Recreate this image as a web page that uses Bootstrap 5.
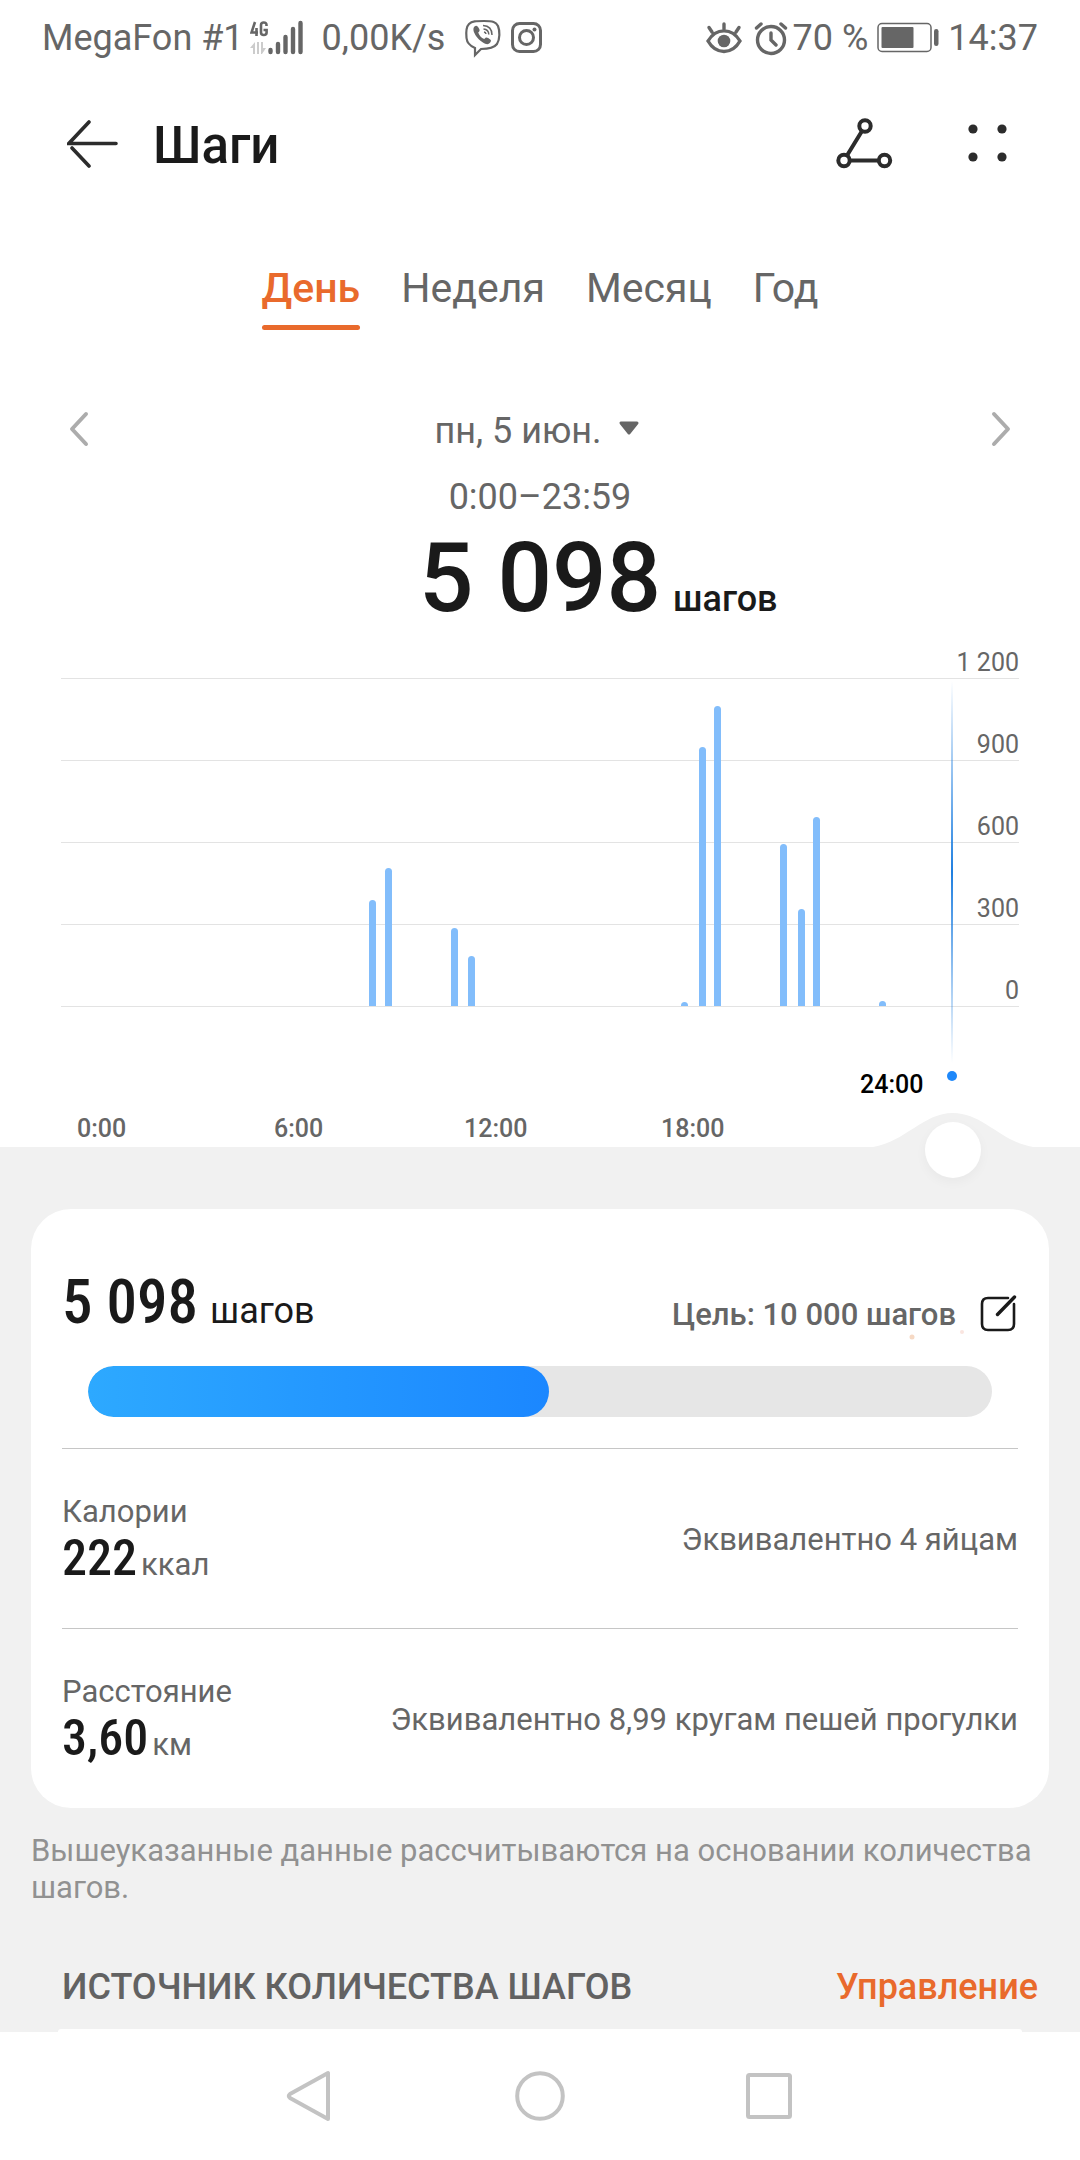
<!DOCTYPE html>
<html lang="ru">
<head>
<meta charset="utf-8">
<meta name="viewport" content="width=device-width, initial-scale=1">
<title>Шаги</title>
<link rel="stylesheet" href="https://cdn.jsdelivr.net/npm/bootstrap@5.3.0/dist/css/bootstrap.min.css">
<style>
  body { font-family: Roboto, "Noto Sans", sans-serif; color: #1a1a1a; background: #fff; }
  button { border: 0; background: none; padding: 0; color: inherit; }
  svg { display: block; }
  .ink-soft { color: #666; }
  .accent { color: #e96a2c; }
  .digits { font-family: "Roboto Condensed", "Liberation Sans Narrow", Roboto, sans-serif; }

  .statusbar { height: 76px; padding: 0 42px; font-size: 36px; line-height: 48px; color: #666; }
  .net-type { width: 54px; height: 36px; margin-left: 6px; }
  .net-speed { margin: 0 18px; }
  .topbar { height: 136px; padding: 0 63px 0 67px; }
  .topbar h1 { margin-left: 34px; font-size: 51px; line-height: 60px; font-weight: 500; }

  .period-tabs { margin-top: 52px; gap: 41px; font-size: 41px; line-height: 48px; }
  .period-tabs .nav-link { position: relative; padding: 0 0 18px; color: #666; }
  .period-tabs .nav-link.active { color: #e96a2c; font-weight: 500; }
  .period-tabs .nav-link.active::after { content: ""; position: absolute; left: 0; right: 0; bottom: 0; height: 5px; border-radius: 3px; background: #e96a2c; }

  .date-row { margin-top: 77px; padding: 0 68px; }
  .text-mid { font-size: 36px; line-height: 48px; }
  .time-range { margin-top: 18px; }
  .total { margin-top: 9px; font-size: 96px; line-height: 96px; font-weight: 500; }
  .total-unit { font-size: 36px; line-height: 48px; }
  .total-unit span { margin-left: 12px; }

  .chart { margin-top: 22px; height: 499px; font-size: 25px; line-height: 30px; }
  .plot { margin: 0 61px; }
  .grid-step { height: 82px; border-bottom: 1px solid #e3e3e3; }
  .grid-step:first-child { height: 31px; }
  .bars { left: 0; right: 0; bottom: 1px; height: 328px; }
  .bars i { position: absolute; bottom: 0; width: 7px; margin-left: -4px; background: #82bdfb; border-radius: 4px 4px 0 0; }
  .hours { padding: 0 0 3px 3px; font-weight: 500; }
  .hours span { flex: 0 0 18.3%; text-align: center; }
  .cursor { left: 88.1%; top: 33px; height: 400px; width: 2px; }
  .cursor-line { width: 2px; height: 382px; background: linear-gradient(#1f86f000, #1f7fe0 50%, #1f86f000); }
  .cursor-dot { left: -4px; bottom: 0; width: 10px; height: 10px; border-radius: 50%; background: #1e88fa; }
  .cursor-time { right: 30px; bottom: -19px; color: #000; font-weight: 500; }

  .lower { background: #f1f1f1; }
  .handle { height: 62px; }
  .bump { position: absolute; left: 88.2%; top: -34px; transform: translateX(-50%); }
  .handle input { position: absolute; left: 74px; right: 99px; top: -25px; width: auto; height: 56px; appearance: none; -webkit-appearance: none; background: none; }
  .handle input::-webkit-slider-thumb { -webkit-appearance: none; width: 56px; height: 56px; border-radius: 50%; background: #fff; box-shadow: 0 4px 12px #0000000a; }
  .handle input::-moz-range-thumb { width: 56px; height: 56px; border: 0; border-radius: 50%; background: #fff; }

  .panel { margin: 0 31px; padding: 61px 31px 0; background: #fff; border-radius: 40px; }
  .big-digits { font-size: 61px; line-height: 64px; font-weight: 500; }
  .goal { font-size: 31px; line-height: 40px; font-weight: 500; }
  .sparks { right: 44px; bottom: -10px; }
  .goal-bar { margin: 31px 26px; height: 51px; border-radius: 26px; background: #e6e6e6; }
  .goal-bar .progress-bar { border-radius: 26px; background: linear-gradient(90deg, #2da9ff, #1b87ff); }
  .metric { height: 180px; padding-top: 2px; border-top: 1px solid #c6c6c6; font-size: 31px; line-height: 36px; color: #666; }
  .metric-digits { font-size: 50px; line-height: 56px; font-weight: 500; color: #1a1a1a; }
  .note { margin: 24px 31px 0; font-size: 31px; line-height: 37px; color: #919191; }
  .source { margin-top: 57px; padding: 0 42px 0 62px; font-weight: 500; }
  .source h2 { font-size: 36px; line-height: 48px; font-weight: 500; color: #626262; }
  .peek { margin: 18px 58px 0; height: 3px; background: #fff; border-radius: 8px 8px 0 0; }
  .sysnav { height: 128px; gap: 181px; background: #fff; }
</style>
<script src="https://cdn.jsdelivr.net/npm/bootstrap@5.3.0/dist/js/bootstrap.bundle.min.js"></script>
</head>
<body class="d-flex flex-column min-vh-100">

<div class="statusbar d-flex align-items-center justify-content-between">
  <div class="d-flex align-items-center">
    <span>MegaFon #1</span>
    <svg class="net-type" viewBox="0 0 54 36" aria-label="4G">
      <g fill="none" stroke="#666" stroke-width="2.600"><path d="M5 2 1.500 12.500H8M6.500 8v8"/><path d="M16.500 6V5q0-2.500-2.700-2.500T11 5v7.500q0 2.500 2.800 2.500t2.800-2.500V10H13.500"/></g>
      <g fill="#ccc"><path d="M0 28l5-6v12H3v-6zM7 22h2v12H7zM11 22h2v6h3l-4 6h-1z"/></g>
      <g stroke="#666" stroke-width="4.400" stroke-linecap="round"><path d="M20.500 30v2M28 24v8M35.500 17v15M43 9v23M50.500 3v29"/></g>
    </svg>
    <span class="net-speed">0,00K/s</span>
    <svg width="42" height="40" viewBox="0 0 42 40" fill="none" stroke="#666" stroke-width="2.200">
      <path d="M21 3c9 0 12 1 14 5 2 5 2 13-1 18-3 4-8 5-16 5l-6 6v-7C7 28 4 25 3.500 20 3 15 3 9 6 6c3-3 7-3 15-3z"/>
      <path fill="#666" stroke="none" d="M11.500 8.500c2-1.500 3-.5 4.500 2 1.200 2 .5 2.800-.8 4 1 3 3 5.300 6 6.500 1.300-1.500 2-2 4-1 3 2 3.500 2.500 2 4.500-2.200 2.700-4 2-8-.5-4.500-3-8-8-8.700-11.500-.2-2 0-3 1-4z"/>
      <path stroke-width="1.500" d="M20 7.500c6 .3 9 3.500 9 9.500M20.500 11c3.500.3 5.200 2 5.300 5.500M21 14c1.200.2 1.800.8 2 2"/>
    </svg>
    <svg class="ms-1" width="36" height="36" viewBox="0 0 36 36" fill="none" stroke="#666" stroke-width="3">
      <rect x="3.500" y="3.500" width="28" height="28" rx="7"/><circle cx="17.500" cy="17.500" r="7"/><circle cx="25.500" cy="9.500" r="2" fill="#666" stroke="none"/>
    </svg>
  </div>
  <div class="d-flex align-items-center">
    <svg class="me-2" width="40" height="36" viewBox="0 0 40 36" fill="none" stroke="#666" stroke-width="3.400" stroke-linecap="round">
      <path d="M3 21C11 7.500 27 7.500 35 21 27 35 11 35 3 21zM19 9V4M7 12 4 7.500M31 12l3-4.500"/><circle cx="19" cy="21" r="6.300" fill="#666" stroke="none"/>
    </svg>
    <svg width="36" height="36" viewBox="0 0 36 36" fill="none" stroke="#666" stroke-width="3.400" stroke-linecap="round">
      <circle cx="18" cy="20" r="13.500"/><path d="M18 13v7l5 5M3.500 8 8 4M32.500 8 28 4"/>
    </svg>
    <span class="ms-1">70 %</span>
    <svg class="ms-2" width="64" height="36" viewBox="0 0 64 36">
      <rect x="2" y="3.500" width="53" height="28" rx="4" fill="none" stroke="#666" stroke-width="1.500"/><rect x="5.500" y="7" width="32" height="21" rx="1" fill="#666"/><rect x="58" y="9" width="4.500" height="17" rx="2.200" fill="#666"/>
    </svg>
    <span class="ms-2">14:37</span>
  </div>
</div>

<header class="topbar d-flex align-items-center">
  <button type="button" aria-label="Назад">
    <svg width="52" height="52" viewBox="0 0 52 52" fill="none" stroke="#2c2c2c" stroke-width="3.600" stroke-linecap="round"><path d="M22 4 1.800 25.500H49M5 30l17 18"/></svg>
  </button>
  <h1 class="mb-0 pt-1">Шаги</h1>
  <button type="button" class="ms-auto" aria-label="Поделиться">
    <svg width="58" height="52" viewBox="0 0 58 52" fill="none" stroke="#2c2c2c" stroke-width="4"><circle cx="30" cy="8" r="5.700"/><circle cx="9" cy="42.500" r="5.700"/><circle cx="49.500" cy="42.500" r="5.700"/><path d="M27 13 12 37.500M15 42.500h28.500"/></svg>
  </button>
  <button type="button" class="ms-5 ps-3" aria-label="Меню">
    <svg width="60" height="52" viewBox="0 0 60 52" fill="#2c2c2c"><circle cx="16" cy="11" r="4.600"/><circle cx="45" cy="11" r="4.600"/><circle cx="16" cy="39" r="4.600"/><circle cx="45" cy="39" r="4.600"/></svg>
  </button>
</header>

<nav class="nav period-tabs justify-content-center">
  <a class="nav-link active" aria-current="page" href="#day">День</a>
  <a class="nav-link" href="#week">Неделя</a>
  <a class="nav-link" href="#month">Месяц</a>
  <a class="nav-link" href="#year">Год</a>
</nav>

<div class="date-row d-flex align-items-center justify-content-between ink-soft">
  <button type="button" aria-label="Предыдущий день">
    <svg width="22" height="40" viewBox="0 0 22 40" fill="none" stroke="#acacac" stroke-width="4" stroke-linecap="round" stroke-linejoin="round"><path d="M18 3 4 18l14 15"/></svg>
  </button>
  <button type="button" class="d-flex text-mid">пн, 5 июн.
    <svg class="ms-3" width="28" height="36" viewBox="0 0 28 36" fill="#666" stroke="#666" stroke-width="3" stroke-linejoin="round"><path d="M3 16h16l-8 10z"/></svg>
  </button>
  <button type="button" aria-label="Следующий день">
    <svg width="22" height="40" viewBox="0 0 22 40" fill="none" stroke="#acacac" stroke-width="4" stroke-linecap="round" stroke-linejoin="round"><path d="M4 3l14 15L4 33"/></svg>
  </button>
</div>
<div class="time-range text-mid text-center ink-soft">0:00–23:59</div>
<!-- The number stays centred; equal side columns let the unit hang on its baseline. -->
<div class="total d-flex align-items-baseline">
  <div class="col"></div>
  <div>5 098</div>
  <div class="col total-unit"><span>шагов</span></div>
</div>

<section class="chart position-relative d-flex flex-column ink-soft">
  <div class="plot position-relative">
    <div>
      <div class="grid-step d-flex align-items-end justify-content-end">1 200</div>
      <div class="grid-step d-flex align-items-end justify-content-end">900</div>
      <div class="grid-step d-flex align-items-end justify-content-end">600</div>
      <div class="grid-step d-flex align-items-end justify-content-end">300</div>
      <div class="grid-step d-flex align-items-end justify-content-end">0</div>
    </div>
    <div class="bars position-absolute">
      <i style="left:32.6%;height:32.3%"></i>
      <i style="left:34.2%;height:42.1%"></i>
      <i style="left:41.1%;height:23.8%"></i>
      <i style="left:42.9%;height:15.2%"></i>
      <i style="left:65.1%;height:1.2%"></i>
      <i style="left:67.0%;height:79%"></i>
      <i style="left:68.6%;height:91.5%"></i>
      <i style="left:75.5%;height:49.4%"></i>
      <i style="left:77.3%;height:29.6%"></i>
      <i style="left:78.9%;height:57.6%"></i>
      <i style="left:85.8%;height:1.5%"></i>
    </div>
  </div>
  <div class="hours d-flex mt-auto"><span>0:00</span><span>6:00</span><span>12:00</span><span>18:00</span></div>
  <div class="cursor position-absolute">
    <div class="cursor-line"></div>
    <div class="cursor-dot position-absolute"></div>
    <div class="cursor-time position-absolute">24:00</div>
  </div>
</section>

<main class="lower flex-grow-1">
  <div class="handle position-relative">
    <svg class="bump" width="160" height="35" viewBox="0 0 160 35"><path fill="#f1f1f1" d="M0 35v-1C32 29 50 0 80 0s48 29 80 34v1z"/></svg>
    <input type="range" min="0" max="24" value="24" aria-label="Время">
  </div>

  <section class="panel">
    <div class="d-flex justify-content-between align-items-end position-relative">
      <div class="d-flex align-items-baseline"><span class="digits big-digits">5 098</span><span class="text-mid ms-2 ps-1">шагов</span></div>
      <div class="goal d-flex align-items-center ink-soft">Цель: 10 000 шагов
        <button type="button" class="ms-4" aria-label="Изменить цель">
          <svg width="38" height="40" viewBox="0 0 38 40" fill="none" stroke="#1a1a1a" stroke-width="2.600" stroke-linecap="round"><path d="M28 3H8Q2 3 2 9v20q0 6 6 6h20q6 0 6-6V9"/><path stroke-width="3.400" d="M17.500 19.500 34.500 2"/></svg>
        </button>
      </div>
      <svg class="sparks position-absolute" width="66" height="20" viewBox="0 0 66 20"><circle cx="4" cy="12" r="2.500" fill="#f6d9c4"/><circle cx="54" cy="7" r="2" fill="#fae5e0"/></svg>
    </div>
    <div class="goal-bar progress" role="progressbar" aria-label="Выполнение цели" aria-valuenow="51" aria-valuemin="0" aria-valuemax="100">
      <div class="progress-bar" style="width:51%"></div>
    </div>
    <div class="metric d-flex align-items-center justify-content-between">
      <div>
        <div>Калории</div>
        <div class="d-flex align-items-baseline"><span class="digits metric-digits">222</span><span class="ms-1">ккал</span></div>
      </div>
      <div>Эквивалентно 4 яйцам</div>
    </div>
    <div class="metric d-flex align-items-center justify-content-between">
      <div>
        <div>Расстояние</div>
        <div class="d-flex align-items-baseline"><span class="digits metric-digits">3,60</span><span class="ms-1">км</span></div>
      </div>
      <div>Эквивалентно 8,99 кругам пешей прогулки</div>
    </div>
  </section>

  <p class="note">Вышеуказанные данные рассчитываются на основании количества шагов.</p>

  <div class="source text-mid d-flex justify-content-between align-items-center">
    <h2 class="mb-0">ИСТОЧНИК КОЛИЧЕСТВА ШАГОВ</h2>
    <a href="#manage" class="accent text-decoration-none">Управление</a>
  </div>
  <div class="peek"></div>
</main>

<footer class="sysnav d-flex align-items-center justify-content-center">
  <button type="button" aria-label="Назад"><svg width="50" height="54" viewBox="0 0 50 54" fill="none" stroke="#c3c3c3" stroke-width="4" stroke-linejoin="round"><path d="M44 4v46L6 29q-2.500-2 0-4z"/></svg></button>
  <button type="button" aria-label="Домой"><svg width="50" height="54" viewBox="0 0 50 54" fill="none" stroke="#c3c3c3" stroke-width="4"><circle cx="25" cy="27" r="22.800"/></svg></button>
  <button type="button" aria-label="Недавние"><svg width="50" height="54" viewBox="0 0 50 54" fill="none" stroke="#c3c3c3" stroke-width="4"><rect x="2" y="6" width="42" height="42" rx="1.500"/></svg></button>
</footer>
</body>
</html>
